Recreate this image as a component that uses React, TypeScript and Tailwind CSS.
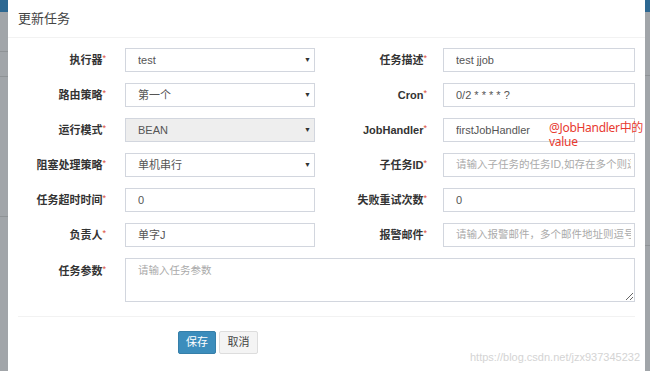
const font = { fontFamily: '"Liberation Sans", "Noto Sans CJK SC", sans-serif' };

function Label({ text, className = '' }: { text: string; className?: string }) {
  return (
    <div className={`text-right text-[11px] font-bold text-[#333] shrink-0 ${className}`}>
      {text}
      <span className="text-[#dd4b39] font-normal text-[9px] align-top">*</span>
    </div>
  );
}

function Field({
  value,
  placeholder,
  select,
  disabled,
  className = '',
}: {
  value?: string;
  placeholder?: string;
  select?: boolean;
  disabled?: boolean;
  className?: string;
}) {
  return (
    <div
      className={`h-[24px] border border-[#d2d6de] flex items-center pl-[12px] pr-[3px] text-[11px] shrink-0 overflow-hidden whitespace-nowrap ${
        disabled ? 'bg-[#eeeeee]' : 'bg-white'
      } ${className}`}
    >
      <span className={`flex-1 overflow-hidden ${value ? 'text-[#555]' : 'text-[#aaa] text-[10.5px]'}`}>
        {value ?? placeholder}
      </span>
      {select && <span className="text-[7px] text-[#333] ml-1">▼</span>}
    </div>
  );
}

const rows = [
  { l: '执行器', lv: 'test', ls: true, r: '任务描述', rv: 'test jjob' },
  { l: '路由策略', lv: '第一个', ls: true, r: 'Cron', rv: '0/2 * * * * ?' },
  { l: '运行模式', lv: 'BEAN', ls: true, ld: true, r: 'JobHandler', rv: 'firstJobHandler' },
  { l: '阻塞处理策略', lv: '单机串行', ls: true, r: '子任务ID', rp: '请输入子任务的任务ID,如存在多个则逗号分隔' },
  { l: '任务超时时间', lv: '0', r: '失败重试次数', rv: '0' },
  { l: '负责人', lv: '单字J', r: '报警邮件', rp: '请输入报警邮件，多个邮件地址则逗号分隔' },
];

export default function App() {
  return (
    <div className="w-[650px] h-[371px] flex overflow-hidden relative" style={font}>
      {/* backdrop strips */}
      <div className="w-[8px] flex flex-col bg-[#a1a5a9]">
        <div className="h-[12px] bg-[#2d6892]" />
        <div className="h-[40px] border-b border-[#8f9396]" />
        <div className="h-[25px] border-b border-[#8f9396]" />
        <div className="h-[140px] border-b border-[#8f9396]" />
      </div>

      {/* modal */}
      <div className="flex-1 bg-white flex flex-col">
        <div className="h-[38px] border-b border-[#f2f2f2] flex items-center px-[10px]">
          <span className="text-[13px] text-[#444]">更新任务</span>
        </div>

        <div className="pt-[10px] flex flex-col gap-[11px]">
          {rows.map((r) => (
            <div key={r.l} className="flex items-center h-[24px]">
              <Label text={r.l} className="w-[98px]" />
              <Field value={r.lv} select={r.ls} disabled={r.ld} className="ml-[19px] w-[190px]" />
              <Label text={r.r} className="w-[112px]" />
              <Field value={r.rv} placeholder={r.rp} className="ml-[16px] w-[192px]" />
            </div>
          ))}
          <div className="flex items-start">
            <Label text="任务参数" className="w-[98px] pt-[5px]" />
            <textarea
              readOnly
              placeholder="请输入任务参数"
              className="ml-[19px] w-[510px] h-[44px] border border-[#d2d6de] px-[12px] py-[4px] text-[10.5px] placeholder:text-[#aaa] outline-none"
            />
          </div>
        </div>

        <div className="mx-[10px] mt-[14px] border-t border-[#f2f2f2] pt-[14px] flex gap-[3px] pl-[160px]">
          <button className="h-[23px] w-[38px] bg-[#3c8dbc] border border-[#367fa9] rounded-[2px] text-white text-[11px]">
            保存
          </button>
          <button className="h-[23px] w-[39px] bg-[#f4f4f4] border border-[#ddd] rounded-[2px] text-[#444] text-[11px]">
            取消
          </button>
        </div>
      </div>

      <div className="w-[5px] flex flex-col bg-[#a1a5a9]">
        <div className="h-[12px] bg-[#2d6892]" />
        <div className="h-[64px] border-b border-[#8f9396]" />
        <div className="h-[170px] border-b border-[#8f9396]" />
      </div>

      {/* annotation */}
      <div
        className="absolute left-[549px] top-[121px] text-[12px] leading-[14px] text-[#e8392f] tracking-[-0.3px]"
        style={{ fontFamily: '"Noto Sans", "Noto Sans CJK SC", sans-serif' }}
      >
        @JobHandler中的
        <br />
        value
      </div>

      {/* watermark */}
      <div className="absolute left-[470px] top-[349px] text-[11px] text-[#d4d4d4]">
        https://blog.csdn.net/jzx937345232
      </div>
    </div>
  );
}
